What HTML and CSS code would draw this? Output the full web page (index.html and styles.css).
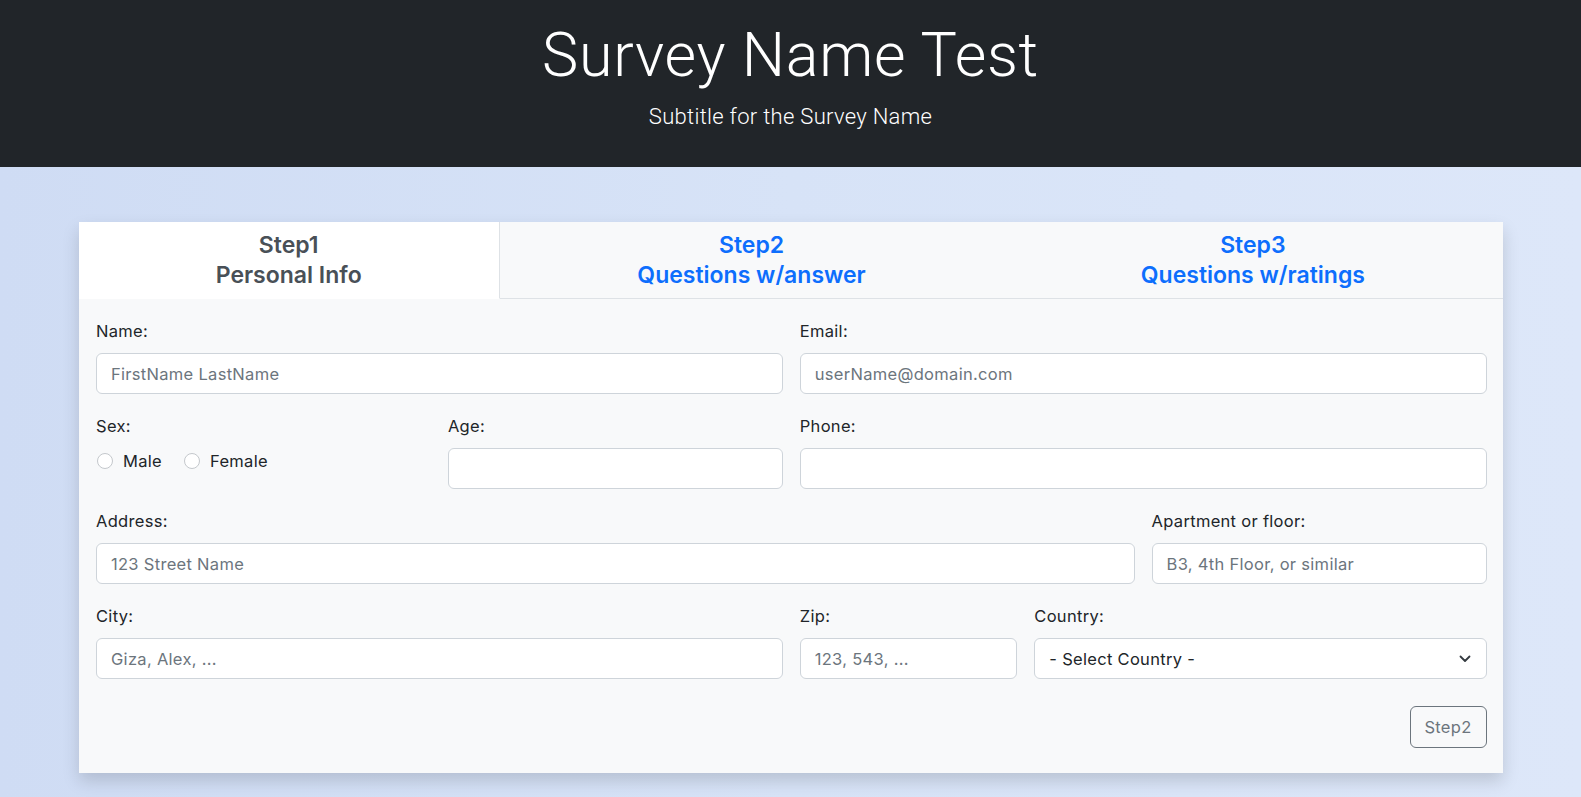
FILE: index.html
```html
<!DOCTYPE html>
<html lang="en">
<head>
<meta charset="utf-8">
<title>Survey Name Test</title>
<link rel="stylesheet" href="styles.css">
</head>
<body>
<header class="hero">
  <h1 class="hero-title">Survey Name Test</h1>
  <p class="hero-sub">Subtitle for the Survey Name</p>
</header>
<main class="page">
  <section class="card">
    <nav class="tabs">
      <a class="tab tab-1 active" href="#"><span class="tab-step">Step1</span><span class="tab-name">Personal Info</span></a>
      <a class="tab tab-2" href="#"><span class="tab-step">Step2</span><span class="tab-name">Questions w/answer</span></a>
      <a class="tab tab-3" href="#"><span class="tab-step">Step3</span><span class="tab-name">Questions w/ratings</span></a>
    </nav>
    <form class="card-body">
      <div class="grid">
        <div class="field span-6">
          <label class="lbl">Name:</label>
          <input class="ctl" type="text" placeholder="FirstName LastName">
        </div>
        <div class="field span-6">
          <label class="lbl">Email:</label>
          <input class="ctl" type="text" placeholder="userName@domain.com">
        </div>

        <div class="field span-3">
          <label class="lbl">Sex:</label>
          <div class="radios">
            <label class="radio"><span class="dot"></span>Male</label>
            <label class="radio"><span class="dot"></span>Female</label>
          </div>
        </div>
        <div class="field span-3">
          <label class="lbl">Age:</label>
          <input class="ctl" type="text">
        </div>
        <div class="field span-6">
          <label class="lbl">Phone:</label>
          <input class="ctl" type="text">
        </div>

        <div class="field span-9">
          <label class="lbl">Address:</label>
          <input class="ctl" type="text" placeholder="123 Street Name">
        </div>
        <div class="field span-3">
          <label class="lbl">Apartment or floor:</label>
          <input class="ctl" type="text" placeholder="B3, 4th Floor, or similar">
        </div>

        <div class="field span-6">
          <label class="lbl">City:</label>
          <input class="ctl" type="text" placeholder="Giza, Alex, ...">
        </div>
        <div class="field span-2">
          <label class="lbl">Zip:</label>
          <input class="ctl" type="text" placeholder="123, 543, ...">
        </div>
        <div class="field span-4">
          <label class="lbl">Country:</label>
          <div class="select-wrap">
            <select class="ctl sel">
              <option>- Select Country -</option>
            </select>
            <svg class="chev" width="14" height="10" viewBox="0 0 14 10"><path d="M2.5 2.5l4.5 4.5 4.5-4.5" fill="none" stroke="#343a40" stroke-width="1.8" stroke-linecap="round" stroke-linejoin="round"/></svg>
          </div>
        </div>
      </div>
      <div class="actions">
        <button type="button" class="btn">Step2</button>
      </div>
    </form>
  </section>
</main>
</body>
</html>
```

FILE: styles.css
```css
* { box-sizing: border-box; }
html, body { margin: 0; padding: 0; }
body {
  font-family: "Inter", "Roboto", "Liberation Sans", sans-serif;
  color: #212529;
  min-height: 797px;
  background: linear-gradient(90deg, #cfdcf4 0%, #d7e3f7 50%, #dde7f9 100%);
}
.hero {
  background: #212529;
  color: #fff;
  height: 167px;
  text-align: center;
  padding-top: 20px;
}
.hero-title {
  margin: 0;
  font-family: "Roboto", sans-serif;
  font-weight: 300;
  font-size: 61px;
  line-height: 70px;
  letter-spacing: 0.7px;
}
.hero-sub {
  margin: 12px 0 0;
  font-family: "Roboto", sans-serif;
  font-weight: 300;
  font-size: 22px;
  line-height: 30px;
  letter-spacing: 0.3px;
}
.page { padding-top: 55px; padding-bottom: 25px; }
.card {
  width: 1424px;
  margin: 0 auto;
  background: #f8f9fa;
  box-shadow: 0 8px 16px rgba(0,0,0,0.15);
}
.tabs {
  display: flex;
  height: 77px;
}
.tab {
  display: flex;
  flex-direction: column;
  align-items: center;
  justify-content: center;
  text-decoration: none;
  color: #0d6efd;
  font-weight: 600;
  font-size: 23px;
  line-height: 30px;
  border-bottom: 1px solid #dee2e6;
  background: #f8f9fa;
}
.tab-1 { flex: 421 1 0; }
.tab-2 { flex: 504 1 0; }
.tab-3 { flex: 500 1 0; }
.tab.active {
  background: #fff;
  color: #495057;
  border-bottom-color: transparent;
  border-right: 1px solid #dee2e6;
}
.card-body {
  padding: 20px 16px 25px 17.5px;
}
.grid {
  display: grid;
  grid-template-columns: repeat(12, 1fr);
  column-gap: 17px;
  row-gap: 20px;
}
.span-2 { grid-column: span 2; }
.span-3 { grid-column: span 3; }
.span-4 { grid-column: span 4; }
.span-6 { grid-column: span 6; }
.span-9 { grid-column: span 9; }
.field { display: flex; flex-direction: column; }
.lbl {
  font-size: 16.5px;
  letter-spacing: 0.3px;
  line-height: 24px;
  margin-bottom: 10px;
  color: #212529;
}
.ctl {
  height: 41px;
  width: 100%;
  border: 1px solid #ced4da;
  border-radius: 6px;
  background: #fff;
  padding: 0 14px;
  font-family: inherit;
  font-size: 16.5px;
  letter-spacing: 0.3px;
  color: #212529;
  outline: none;
}
.ctl::placeholder { color: #6c757d; }
.select-wrap { position: relative; }
.sel {
  appearance: none;
  -webkit-appearance: none;
  padding-right: 40px;
}
.chev {
  position: absolute;
  right: 15px;
  top: 16px;
  pointer-events: none;
}
.radios {
  display: flex;
  align-items: center;
  height: 24px;
  margin-top: 1px;
}
.radio {
  display: flex;
  align-items: center;
  font-size: 16.5px;
  letter-spacing: 0.3px;
  margin-right: 21px;
}
.dot {
  width: 16px;
  height: 16px;
  border-radius: 50%;
  border: 1px solid #c4c8cc;
  background: #fff;
  margin-right: 10px;
  margin-left: 1px;
}
.actions {
  display: flex;
  justify-content: flex-end;
  margin-top: 27px;
}
.btn {
  height: 42px;
  width: 77px;
  border: 1px solid #6c757d;
  border-radius: 6px;
  background: transparent;
  color: #6c757d;
  font-family: inherit;
  font-size: 16.5px;
  letter-spacing: 0.3px;
}
```
